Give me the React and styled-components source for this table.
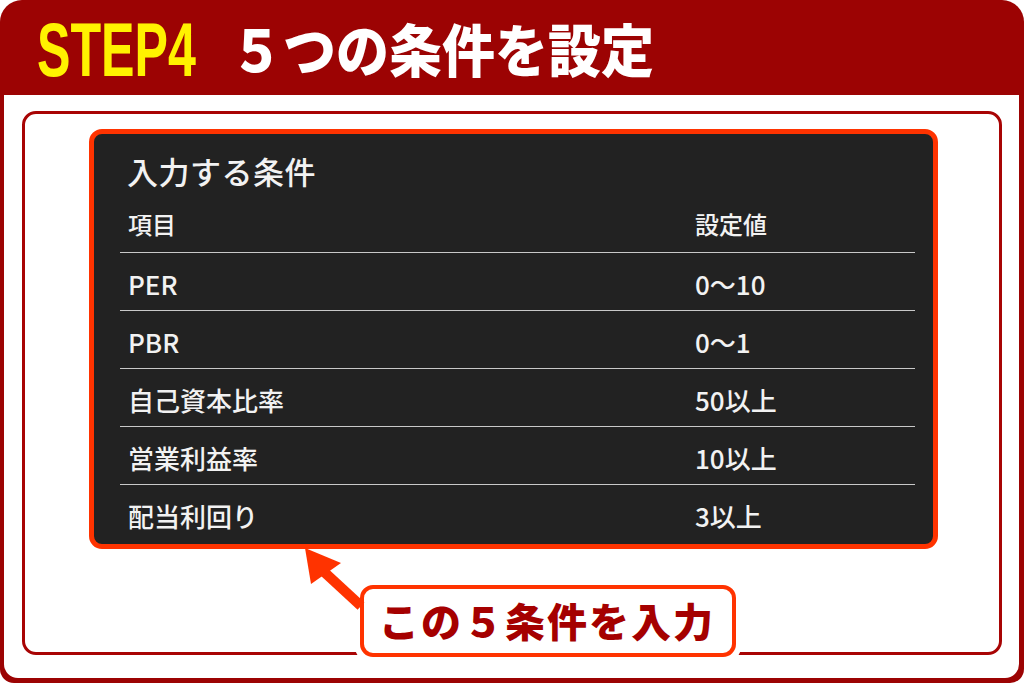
import styled, { createGlobalStyle } from "styled-components";

const GlobalStyle = createGlobalStyle`
    html, body {
        margin: 0;
        padding: 0;
        background: #ffffff;
    }
    body {
        font-family: "Noto Sans CJK JP", "Noto Sans", sans-serif;
    }
`;

const Frame = styled.div`
    width: 1024px;
    height: 683px;
    box-sizing: border-box;
    background: #9c0303;
    border-radius: 22px 22px 14px 14px;
    padding: 0 5px 5px 4px;
    display: flex;
    flex-direction: column;
    overflow: hidden;
`;

const Header = styled.header`
    height: 95px;
    flex-shrink: 0;
    display: flex;
    align-items: center;
    padding-left: 33px;
    gap: 33px;
`;

const Step = styled.span`
    display: inline-block;
    width: 160px;
    font-family: "Liberation Sans", Arial, sans-serif;
    font-weight: 700;
    font-size: 76px;
    line-height: 1;
    color: #fff200;
    white-space: nowrap;
    transform: scaleX(0.66);
    transform-origin: left center;
    margin-top: 4px;
`;

const HeadTitle = styled.h1`
    margin: 0;
    font-family: "Noto Sans CJK JP", sans-serif;
    font-weight: 900;
    font-size: 53px;
    line-height: 1;
    color: #ffffff;
    transform: scaleY(1.08);
`;

const Body = styled.main`
    flex: 1;
    background: #ffffff;
    border-radius: 0 0 14px 14px;
    padding: 16px 17px 23px 18px;
    display: flex;
    flex-direction: column;
`;

const InnerBox = styled.section`
    flex: 1;
    border: 3px solid #a80404;
    border-radius: 14px;
    padding: 15px 61px 0 64px;
    display: flex;
    flex-direction: column;
`;

const Panel = styled.div`
    background: #222222;
    border: 5px solid #ff3300;
    border-radius: 13px;
    color: #f2f2f2;
    padding-bottom: 1px;
`;

const PanelTitle = styled.h2`
    margin: 0;
    padding: 12px 0 0 33px;
    height: 61px;
    box-sizing: border-box;
    font-size: 31px;
    font-weight: 500;
    line-height: 49px;
    letter-spacing: 0.5px;
`;

const Table = styled.div`
    margin: 0 18px 0 26px;
`;

const Row = styled.div`
    display: grid;
    grid-template-columns: 575px 1fr;
    height: 58px;
    box-sizing: border-box;
    align-items: center;
    border-bottom: ${({ $last }) => ($last ? "none" : "1.5px solid #c9c9c9")};
    padding-top: ${({ $head }) => ($head ? "0" : "4px")};
`;

const Cell = styled.span`
    padding-left: ${({ $value }) => ($value ? "0" : "8px")};
    font-size: ${({ $head }) => ($head ? "24px" : "26px")};
    font-weight: 500;
    line-height: 1;
    white-space: nowrap;
`;

const CalloutWrap = styled.div`
    position: relative;
    align-self: flex-start;
    margin: auto 0 -5px 271px;
`;

const Callout = styled.div`
    position: relative;
    z-index: 1;
    height: 72px;
    box-sizing: border-box;
    display: flex;
    align-items: center;
    padding: 0 17px 2px 15px;
    background: #ffffff;
    border: 4px solid #ff3300;
    border-radius: 13px;
    box-shadow: 0 0 0 6px #ffffff;
    font-family: "Noto Sans CJK JP", sans-serif;
    font-weight: 900;
    font-size: 40px;
    letter-spacing: 2px;
    color: #a50000;
    white-space: nowrap;
`;

const Arrow = styled.svg`
    position: absolute;
    left: -70px;
    top: -45px;
    z-index: 2;
    overflow: visible;
`;

const rows = [
    ["PER", "0〜10"],
    ["PBR", "0〜1"],
    ["自己資本比率", "50以上"],
    ["営業利益率", "10以上"],
    ["配当利回り", "3以上"],
];

export default function App() {
    return (
        <>
            <GlobalStyle />
            <Frame>
                <Header>
                    <Step>STEP4</Step>
                    <HeadTitle>５つの条件を設定</HeadTitle>
                </Header>
                <Body>
                    <InnerBox>
                        <Panel>
                            <PanelTitle>入力する条件</PanelTitle>
                            <Table>
                                <Row $head>
                                    <Cell $head>項目</Cell>
                                    <Cell $head $value>設定値</Cell>
                                </Row>
                                {rows.map(([name, value], i) => (
                                    <Row key={name} $last={i === rows.length - 1}>
                                        <Cell>{name}</Cell>
                                        <Cell $value>{value}</Cell>
                                    </Row>
                                ))}
                            </Table>
                        </Panel>
                        <CalloutWrap>
                            <Arrow width="90" height="80" viewBox="0 0 90 80">
                                <line x1="32" y1="30" x2="71" y2="66" stroke="#ff3300" strokeWidth="10" />
                                <polygon points="15,8 21,44 51,23" fill="#ff3300" />
                            </Arrow>
                            <Callout>この５条件を入力</Callout>
                        </CalloutWrap>
                    </InnerBox>
                </Body>
            </Frame>
        </>
    );
}
